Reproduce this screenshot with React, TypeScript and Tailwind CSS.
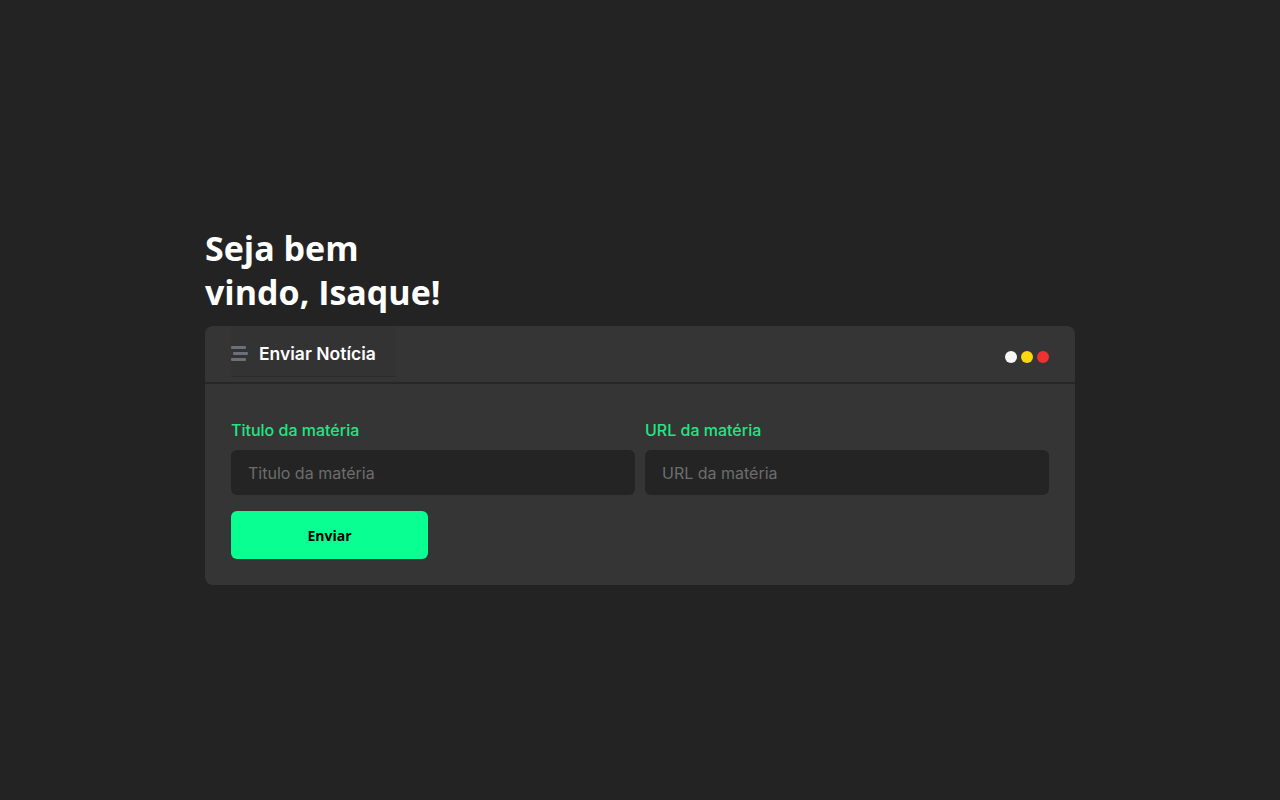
import { useState } from "react";

const StaggerIcon = () => (
  <svg width="18" height="17" viewBox="0 0 18 17" className="shrink-0">
    <rect x="0" y="0" width="15" height="3" rx="1" fill="#6b7078" />
    <rect x="2" y="6" width="15" height="3" rx="1" fill="#6b7078" />
    <rect x="0" y="12" width="15" height="3" rx="1" fill="#6b7078" />
  </svg>
);

const App = () => {
  const [titulo, setTitulo] = useState("");
  const [url, setUrl] = useState("");

  return (
    <div className="min-h-screen w-full bg-[#232323] flex items-center justify-center font-['Inter',sans-serif]">
      <div className="w-[870px] flex flex-col mt-[11px]">
        <h1 className="text-[34px] leading-[44px] font-bold text-white font-['Open_Sans',sans-serif]">
          Seja bem
          <br />
          vindo, Isaque!
        </h1>

        <div className="mt-[12px] bg-[#353535] rounded-lg">
          <div className="h-[58px] px-[26px] flex justify-between border-b-2 border-[#272727]">
            <div className="h-[51px] w-[165px] flex items-center gap-[10px] pt-[7px] border-b border-[#2b2b2b] bg-[#333333]">
              <StaggerIcon />
              <span className="text-[17.5px] font-semibold text-white">Enviar Notícia</span>
            </div>
            <div className="flex items-center gap-[4px] pt-[6px]">
              <span className="w-3 h-3 rounded-full bg-[#f7f7f7]" />
              <span className="w-3 h-3 rounded-full bg-[#fcd60f]" />
              <span className="w-3 h-3 rounded-full bg-[#ee3232]" />
            </div>
          </div>

          <div className="px-[26px] pt-[34px] pb-[26px]">
            <div className="grid grid-cols-2 gap-[10px]">
              <label className="flex flex-col gap-2">
                <span className="text-[16px] leading-6 font-medium text-[#1ee883]">Titulo da matéria</span>
                <input
                  value={titulo}
                  onChange={(e) => setTitulo(e.target.value)}
                  placeholder="Titulo da matéria"
                  className="h-[45px] rounded-md bg-[#242424] px-[17px] text-[16px] text-white placeholder:text-[#6d6d6d] outline-none"
                />
              </label>
              <label className="flex flex-col gap-2">
                <span className="text-[16px] leading-6 font-medium text-[#1ee883]">URL da matéria</span>
                <input
                  value={url}
                  onChange={(e) => setUrl(e.target.value)}
                  placeholder="URL da matéria"
                  className="h-[45px] rounded-md bg-[#242424] px-[17px] text-[16px] text-white placeholder:text-[#6d6d6d] outline-none"
                />
              </label>
            </div>
            <button className="mt-4 w-[197px] h-[48px] rounded-md bg-[#0aff93] text-black text-[14px] font-bold font-['Open_Sans',sans-serif]">
              Enviar
            </button>
          </div>
        </div>
      </div>
    </div>
  );
};

export default App;
